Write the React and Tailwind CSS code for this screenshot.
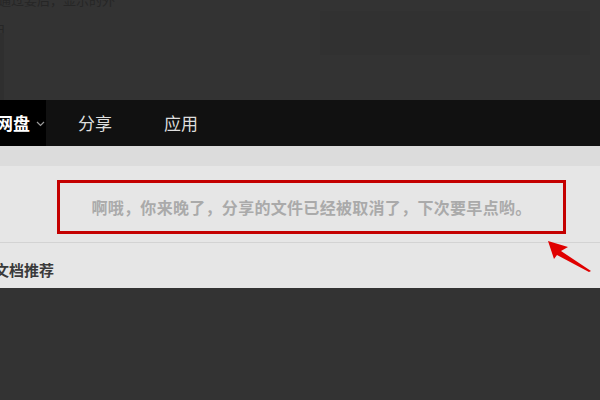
export default function App() {
    const font = { fontFamily: '"Microsoft YaHei", "Noto Sans CJK SC", sans-serif' };
    return (
        <div className="relative w-[600px] h-[400px] overflow-hidden bg-[#333333] flex flex-col" style={font}>
            {/* dim upper area */}
            <div className="relative h-[100px] flex-shrink-0">
                <div className="absolute left-[-2px] top-[-8px] text-[13px] leading-[16px] text-[#262626]">
                    通过要后，显示的外
                </div>
                <div className="absolute left-[-8px] top-[20px] text-[13px] leading-[16px] text-[#262626]">
                    由
                </div>
                <div className="absolute left-0 top-[33px] w-[4px] h-[67px] bg-[#2f2f2f]" />
                <div className="absolute left-[320px] top-[11px] w-[270px] h-[44px] bg-[#313131]" />
            </div>

            {/* nav */}
            <div className="h-[46px] flex-shrink-0 bg-[#111111] flex items-center text-[17px] text-[#dedede]">
                <div className="h-full w-[50px] bg-black flex items-center gap-[6px] -ml-[4px]">
                    <span className="font-bold text-white">网盘</span>
                    <svg width="9" height="6" viewBox="0 0 9 6" className="mt-[1px]">
                        <path d="M1 1l3.5 3.5L8 1" fill="none" stroke="#9a9a9a" strokeWidth="1.2" />
                    </svg>
                </div>
                <span className="ml-[32px]">分享</span>
                <span className="ml-[52px]">应用</span>
            </div>

            {/* light strip */}
            <div className="h-[20px] flex-shrink-0 bg-[#dcdcdc]" />

            {/* panel */}
            <div className="h-[122px] flex-shrink-0 bg-[#e6e6e6] flex flex-col">
                <div className="h-[77px] border-b border-[#d3d3d3] pt-[14px] pl-[57px]">
                    <div className="w-[509px] h-[54px] border-[3px] border-[#c40000] flex items-center justify-center text-[16px] font-semibold text-[#aaaaaa] tracking-[0.3px]">
                        啊哦，你来晚了，分享的文件已经被取消了，下次要早点哟。
                    </div>
                </div>
                <div className="flex-1 flex items-center pt-[10px] -ml-[6px] text-[15px] font-bold text-[#3a3a3a]">
                    文档推荐
                </div>
            </div>

            <svg className="absolute left-0 top-0" width="600" height="400" viewBox="0 0 600 400">
                <polygon points="548,241 568,247 561,251 591,271 589,272 557,255 554,259" fill="#e00000" />
            </svg>
        </div>
    );
}
